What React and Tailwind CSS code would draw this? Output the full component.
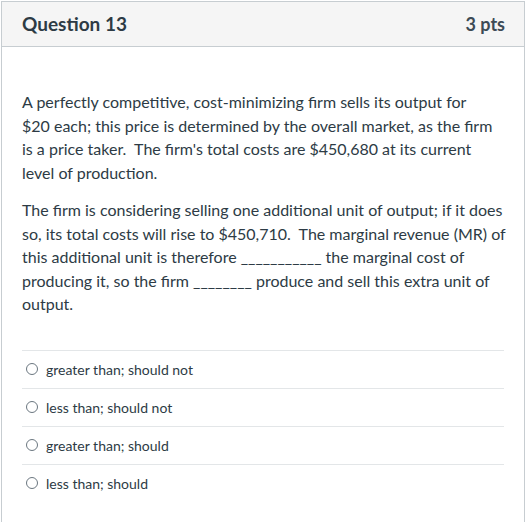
const answers = [
  'greater than; should not',
  'less than; should not',
  'greater than; should',
  'less than; should',
];

export default function App() {
  return (
    <div className="bg-white h-[522px] pt-px pl-px font-['Lato',sans-serif] text-[#2d3b45]">
      <div className="w-[524px] h-[521px] border border-b-0 border-[#c7cdd1]">
        {/* header */}
        <div className="h-[45px] bg-[#f5f5f5] border-b border-[#c7cdd1] flex items-center justify-between pl-5 pr-[19px]">
          <span className="text-[19px] font-bold">Question 13</span>
          <span className="text-[18px] font-bold text-[#3d4b55]">3 pts</span>
        </div>

        {/* question text */}
        <div className="pl-5 pr-[16px] pt-[43px] text-[16px] leading-[23.5px]">
          <p>
            A perfectly competitive, cost-minimizing firm sells its output for $20&nbsp;each; this price is determined by the overall market, as the firm is&nbsp;a&nbsp;price taker.&nbsp; The firm's total costs are $450,680 at its current level&nbsp;of production.
          </p>
          <p className="mt-[14px]">
            The firm is considering selling one additional unit of output; if it does so, its total costs will rise to $450,710.&nbsp; The marginal revenue (MR) of this additional unit is therefore ___________ the marginal cost of producing it, so the firm ________ produce and sell this extra unit of output.
          </p>
        </div>

        {/* answers */}
        <div className="mx-5 mt-[34px]">
          {answers.map((a) => (
            <div key={a} className="h-[38px] border-t border-[#e3e6e8] flex items-center pl-[4px] gap-[8px] text-[14px]">
              <span className="w-[12px] h-[12px] rounded-full border border-[#6b7780] bg-white" />
              <span>{a}</span>
            </div>
          ))}
        </div>
      </div>
    </div>
  );
}
